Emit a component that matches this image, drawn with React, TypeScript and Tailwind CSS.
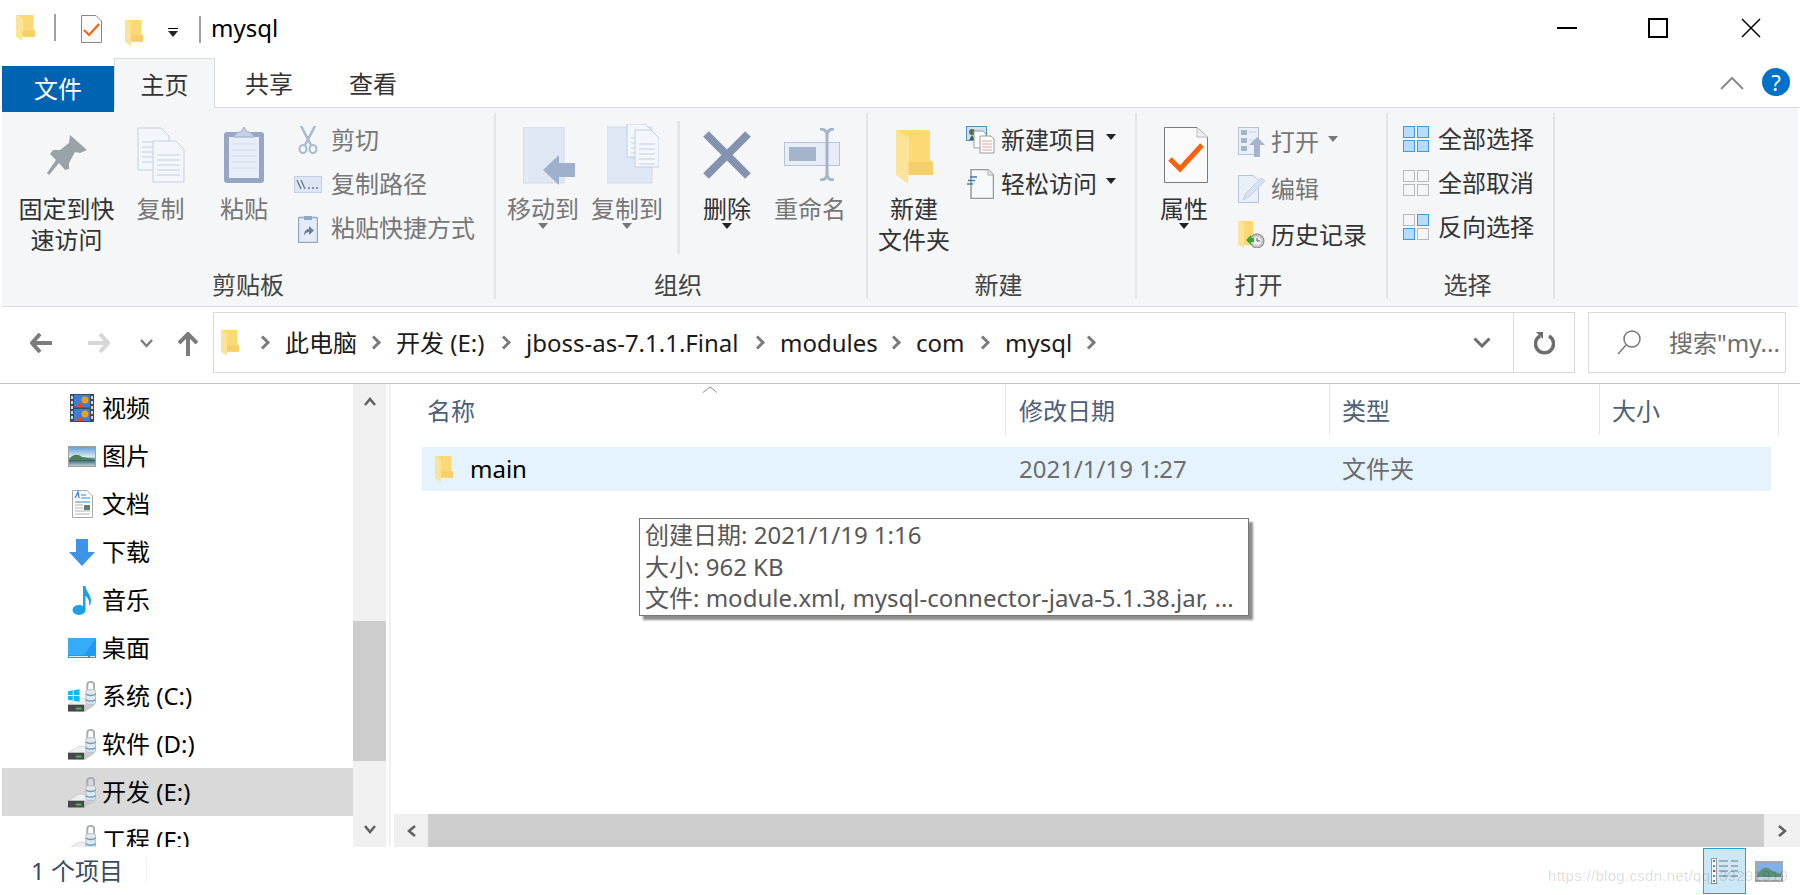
import type { ReactNode } from "react";

const FONT = "font-['Noto_Sans','Noto_Sans_CJK_SC',sans-serif]";

const Folder = ({ w = 18, h = 26 }: { w?: number; h?: number }) => (
  <svg width={w} height={h} viewBox="0 0 36 54" preserveAspectRatio="none">
    <path d="M0 0H33V30L36 32V45H12V8Z" fill="#fcd975" />
    <path d="M12 32H36V45H12Z" fill="#f5cf6a" />
    <path d="M0 0L12 8V54L0 45Z" fill="#fbe39a" />
  </svg>
);

const Caret = ({ dark = true }: { dark?: boolean }) => (
  <svg width="10" height="6" viewBox="0 0 10 6">
    <path d="M0 0H10L5 6Z" fill={dark ? "#222" : "#777"} />
  </svg>
);

const Pin = () => (
  <svg width="40" height="40" viewBox="0 0 40 40">
    <path d="M23 0L40 15L33 18L28 17L22 28L22 34L18 35L12 28L2 40L0 38L9 25L3 19L6 15L13 15L22 8Z" fill="#99a2a6" />
  </svg>
);

const Doc = ({ x, y, w, h }: { x: number; y: number; w: number; h: number }) => (
  <g>
    <path d={`M${x} ${y}H${x + w - 8}L${x + w} ${y + 8}V${y + h}H${x}Z`} fill="#f3f6fb" stroke="#c3d0e4" />
    {[14, 19, 24, 29, 34].map((d) => (
      <path key={d} d={`M${x + 4} ${y + d}H${x + w - 4}`} stroke="#c5d0e0" />
    ))}
  </g>
);

const CopyDocs = () => (
  <svg width="48" height="56" viewBox="0 0 48 56">
    <Doc x={1} y={1} w={31} h={42} />
    <Doc x={16} y={14} w={31} h={41} />
  </svg>
);

const Clipboard = () => (
  <svg width="40" height="58" viewBox="0 0 40 58">
    <rect x="0" y="6" width="40" height="51" rx="3" fill="#95a7c5" />
    <rect x="5" y="11" width="30" height="41" fill="#e7eef8" />
    {[18, 24, 30, 36, 42].map((d) => (
      <path key={d} d={`M7 ${d}H33`} stroke="#d2dcea" />
    ))}
    <path d="M9 11L14 6H17L20 1L23 6H26L31 11Z" fill="#c5d0e2" stroke="#9aacc8" />
  </svg>
);

const Scissors = () => (
  <svg width="20" height="28" viewBox="0 0 20 28" fill="none" stroke="#a8b8d0">
    <path d="M3 0L13 19M17 0L7 19" strokeWidth="2.5" />
    <ellipse cx="5" cy="23" rx="3.5" ry="4" strokeWidth="2" />
    <ellipse cx="15" cy="23" rx="3.5" ry="4" strokeWidth="2" />
  </svg>
);

const PathIcon = () => (
  <svg width="28" height="17" viewBox="0 0 28 17">
    <rect x="0.5" y="0.5" width="27" height="16" fill="#dce5f3" stroke="#c3d0e4" />
    <path d="M3 4L7 13M7 4L11 13" stroke="#6a7690" strokeWidth="1.3" />
    <path d="M14 12H16M18 12H20M22 12H24" stroke="#6a7690" strokeWidth="1.5" />
  </svg>
);

const ShortcutIcon = () => (
  <svg width="20" height="29" viewBox="0 0 20 29">
    <rect x="0.5" y="3.5" width="19" height="25" rx="1" fill="#e3ebf6" stroke="#95a7c5" strokeWidth="1.5" />
    <path d="M6 2H14V6H6Z" fill="#95a7c5" />
    <path d="M6 22C6 17 8 15 11 15V12L16 16.500L11 21V18C9 18 7 19 6 22Z" fill="#6f7f99" />
  </svg>
);

const MoveTo = () => (
  <svg width="52" height="58" viewBox="0 0 52 58">
    <path d="M0 0H41V56H0Z" fill="#dfe7f4" stroke="#d0dbec" />
    <path d="M4 1V55" stroke="#eef2f9" />
    <path d="M20 43L36 28V36H52V50H36V58Z" fill="#9fb0cc" />
  </svg>
);

const CopyTo = () => (
  <svg width="52" height="60" viewBox="0 0 52 60">
    <path d="M0 3H45V59H0Z" fill="#dfe7f4" stroke="#d0dbec" />
    <Doc x={20} y={0} w={26} h={33} />
    <Doc x={28} y={6} w={24} h={37} />
  </svg>
);

const DeleteX = () => (
  <svg width="50" height="50" viewBox="0 0 50 50">
    <path d="M4 4L46 46M46 4L4 46" stroke="#8494b0" strokeWidth="8" />
  </svg>
);

const Rename = () => (
  <svg width="56" height="53" viewBox="0 0 56 53" fill="none">
    <rect x="0.500" y="14.500" width="55" height="23" fill="#e6edf7" stroke="#b4c3da" />
    <rect x="5" y="19" width="27" height="14" fill="#a5b3cb" />
    <path d="M36 1C40 1 43 3 43 7V46C43 50 40 52 36 52M50 1C46 1 43 3 43 7M43 46C43 50 46 52 50 52" stroke="#a5b3cb" strokeWidth="3" />
  </svg>
);

const NewItem = () => (
  <svg width="29" height="28" viewBox="0 0 29 28">
    <rect x="0.500" y="0.500" width="20" height="14" fill="#cfe3f5" stroke="#4c8fc7" />
    <circle cx="6" cy="6" r="3" fill="#5a6b4f" />
    <path d="M3 14L6 9L9 14Z" fill="#44604a" />
    <path d="M8 5H17L20 8V22H8Z" fill="#fff" stroke="#999" />
    <path d="M14 10H25L28 13V27H14Z" fill="#fff" stroke="#999" />
    {[15, 18, 21, 24].map((d) => (
      <path key={d} d={`M16 ${d}H26`} stroke="#e0a0a0" />
    ))}
  </svg>
);

const EasyAccess = () => (
  <svg width="27" height="30" viewBox="0 0 27 30">
    <path d="M4 0.500H21L26.500 6V29.500H4Z" fill="#f8f9fb" stroke="#999" strokeWidth="1.500" />
    <path d="M21 0.500V6H26.500" fill="#e2e6ea" stroke="#aaa" />
    <path d="M3 8H10M1 11.500H8M0 15H6" stroke="#3c7fb1" strokeWidth="1.500" />
  </svg>
);

const Properties = () => (
  <svg width="44" height="56" viewBox="0 0 44 56">
    <path d="M0.500 0.500H33L43.500 10V55.500H0.500Z" fill="#fafafa" stroke="#7a7a7a" />
    <path d="M33 0.500V10H43.500" fill="#eee" stroke="#bbb" />
    <path d="M6 32L16 42L38 18" fill="none" stroke="#f7630c" strokeWidth="5" />
  </svg>
);

const QuickProperties = () => (
  <svg width="21" height="28" viewBox="0 0 21 28">
    <path d="M0.500 0.500H15L20.500 6V27.500H0.500Z" fill="#fafafa" stroke="#888" />
    <path d="M3 15L8 20L18 9" fill="none" stroke="#f7630c" strokeWidth="2.200" />
  </svg>
);

const OpenIcon = () => (
  <svg width="27" height="30" viewBox="0 0 27 30">
    <rect x="0.500" y="0.500" width="20" height="27" fill="#eaf0f8" stroke="#b4c3da" />
    <rect x="3" y="3" width="6" height="5" fill="#a5b3cb" />
    <rect x="3" y="11" width="6" height="5" fill="#a5b3cb" />
    <rect x="3" y="19" width="6" height="5" fill="#a5b3cb" />
    <path d="M11 5H18M11 13H15" stroke="#c5d0e0" />
    <path d="M11 18L19 10L27 18H22V30H16V18Z" fill="#a5b3cb" />
  </svg>
);

const EditIcon = () => (
  <svg width="27" height="28" viewBox="0 0 27 28">
    <path d="M0.500 0.500H15L20.500 5V27.500H0.500Z" fill="#eaf0f8" stroke="#b4c3da" />
    <path d="M5 25L8 18L23 3L27 6L12 21Z" fill="#d7e0ee" stroke="#c3cfe2" />
  </svg>
);

const HistoryIcon = () => (
  <svg width="27" height="27" viewBox="0 0 27 27">
    <path d="M0 0H15V13L18 14V24H6V3Z" fill="#fcd975" />
    <path d="M0 0L6 3V27L0 24Z" fill="#fbe39a" />
    <circle cx="19" cy="20" r="7" fill="#c9c9c9" stroke="#7c7c7c" />
    <circle cx="19" cy="20" r="4" fill="#f2f2f2" />
    <path d="M19 17V20H22" stroke="#555" fill="none" />
    <path d="M8 19L13 14V17H16V21H13V24Z" fill="#3aa53a" />
  </svg>
);

const Grid = ({ on }: { on: boolean[] }) => (
  <svg width="26" height="26" viewBox="0 0 26 26">
    {[
      [0, 0],
      [14, 0],
      [0, 14],
      [14, 14],
    ].map(([x, y], i) => (
      <rect key={i} x={x + 0.5} y={y + 0.5} width="11" height="11" fill={on[i] ? "#b5dcfb" : "#f4f6f8"} stroke={on[i] ? "#3d9ae8" : "#b9b9b9"} />
    ))}
  </svg>
);

const Arrow = ({ color, flip }: { color: string; flip?: boolean }) => (
  <svg width="22" height="20" viewBox="0 0 22 20" className={flip ? "-scale-x-100" : ""}>
    <path d="M10 1L2 10L10 19M2 10H22" fill="none" stroke={color} strokeWidth="4" />
  </svg>
);

const Chevron = ({ color = "#7a7a7a" }: { color?: string }) => (
  <svg width="11" height="15" viewBox="0 0 11 15">
    <path d="M2 1.500L8 7.500L2 13.500" fill="none" stroke={color} strokeWidth="3" />
  </svg>
);

const VideoIcon = () => (
  <svg width="24" height="28" viewBox="0 0 24 28">
    <rect width="24" height="28" fill="#3c4b55" />
    <rect x="4" y="1" width="16" height="12.500" fill="#3a7fd8" />
    <rect x="4" y="15" width="16" height="12" fill="#3a7fd8" />
    <path d="M5 13L10 8L14 13ZM5 27L10 22L14 27Z" fill="#e04a2a" />
    <circle cx="15" cy="6" r="3.500" fill="#e8a020" />
    <circle cx="15" cy="20" r="3.500" fill="#e8a020" />
    {[2, 7, 12, 17, 22].map((d) => (
      <g key={d}>
        <rect x="1" y={d} width="2" height="3" fill="#d8d8d8" />
        <rect x="21" y={d} width="2" height="3" fill="#d8d8d8" />
      </g>
    ))}
  </svg>
);

const PictureIcon = () => (
  <svg width="28" height="21" viewBox="0 0 28 21">
    <defs>
      <linearGradient id="sky" x1="0" y1="0" x2="0" y2="1">
        <stop offset="0" stopColor="#5f9ad8" />
        <stop offset="0.500" stopColor="#d5e7f3" />
        <stop offset="0.700" stopColor="#3a6a70" />
        <stop offset="1" stopColor="#c9d8df" />
      </linearGradient>
    </defs>
    <rect x="0.500" y="0.500" width="27" height="20" fill="url(#sky)" stroke="#a0a0a0" />
    <path d="M2 12C6 8 10 8 14 11C18 12 22 12 26 13V14H2Z" fill="#4b7f5a" />
  </svg>
);

const DocumentIcon = () => (
  <svg width="21" height="28" viewBox="0 0 21 28">
    <path d="M0.500 0.500H15L20.500 6V27.500H0.500Z" fill="#fff" stroke="#a8a8a8" />
    <path d="M3 8L6 2L7 8" fill="none" stroke="#2b88d8" strokeWidth="1.300" />
    <path d="M9 5H14M9 8H18M3 12H18" stroke="#2b88d8" />
    <path d="M3 15H11M3 18H11M3 21H18M3 24H18" stroke="#b0b0b0" />
    <rect x="12" y="15" width="6" height="5" fill="#5f8070" />
  </svg>
);

const DownloadIcon = () => (
  <svg width="26" height="27" viewBox="0 0 26 27">
    <path d="M7 0H19V13H26L13 27L0 13H7Z" fill="#3d94e6" />
  </svg>
);

const MusicIcon = () => (
  <svg width="20" height="29" viewBox="0 0 20 29">
    <ellipse cx="7" cy="24" rx="6.500" ry="5" fill="#1ba1e8" />
    <path d="M11 0H13.500C14 6 19 8 19 15C19 17 18 19 17 20C18 14 15 11 13.500 10V24H11Z" fill="#1ba1e8" />
  </svg>
);

const DesktopIcon = () => (
  <svg width="28" height="20" viewBox="0 0 28 20">
    <rect width="28" height="20" fill="#1e9bf0" />
    <path d="M0 0H28L16 17H0Z" fill="#35acf7" />
    <path d="M1 18.500H20M22 18.500H27" stroke="#d8eefc" />
  </svg>
);

const DriveIcon = ({ win }: { win?: boolean }) => (
  <svg width="29" height="32" viewBox="0 0 29 32">
    <path d="M0 25L12 18L22 19L27 23V26L17 32H0Z" fill="#eeeff0" stroke="#b4b6b8" strokeWidth="0.500" />
    <path d="M0 25H17V32H0Z" fill="#45494c" />
    <path d="M17 25L27 23V26L17 32Z" fill="#c9cbcd" />
    <rect x="8" y="28" width="6" height="2" fill="#53b653" />
    <path d="M20 10V4C20 0.500 27 0.500 27 4V10" fill="none" stroke="#a9acaf" strokeWidth="2" />
    <rect x="18.500" y="9.500" width="10" height="15" rx="2" fill="#e2e7ea" stroke="#b3bcc2" />
    <path d="M18.500 14C22 16 25 16 28.500 14M18.500 20C22 22 25 22 28.500 20" fill="none" stroke="#5d9fc9" strokeWidth="1.500" />
    {win && <path d="M0 11L5 10V15H0ZM6 10L12 9V15H6ZM0 16H5V21L0 20ZM6 16H12V22L6 21Z" fill="#0dbbf2" />}
  </svg>
);

const DetailsIcon = () => (
  <svg width="28" height="26" viewBox="0 0 28 26">
    <rect x="0.500" y="0.500" width="5" height="25" fill="#fff" stroke="#999" />
    {[3, 8, 13, 18, 23].map((d, i) => (
      <rect key={d} x="2" y={d - 1} width="2" height="2" fill={i === 2 ? "#c33" : "#3a8fb5"} />
    ))}
    {[3, 8, 13, 18, 23].map((d, i) =>
      i === 4 ? null : <path key={d} d={`M8 ${d}H17M20 ${d}H27`} stroke="#777" />
    )}
  </svg>
);

const LargeIcons = () => (
  <svg width="28" height="21" viewBox="0 0 28 21">
    <rect x="1" y="1" width="26" height="19" fill="#7fb0ea" stroke="#a8a8a8" strokeWidth="2" />
    <path d="M2 15C6 6 12 5 16 9C20 12 24 12 26 13V19H2Z" fill="#5c9078" />
    <rect x="2" y="16" width="24" height="3" fill="#c5d8e5" />
  </svg>
);

type LargeProps = {
  w: number;
  icon: ReactNode;
  lines: string[];
  muted?: boolean;
  caret?: boolean;
  iconClass?: string;
};

const LargeButton = ({ w, icon, lines, muted, caret, iconClass = "pt-[12px]" }: LargeProps) => (
  <div className={`flex flex-col items-center ${muted ? "text-[#777]" : "text-[#333]"}`} style={{ width: w }}>
    <div className={`h-[80px] flex items-start justify-center ${iconClass}`}>{icon}</div>
    {lines.map((l) => (
      <div key={l} className="leading-[31px] whitespace-nowrap">
        {l}
      </div>
    ))}
    {caret && (
      <div className="-mt-[1px]">
        <Caret dark={!muted} />
      </div>
    )}
  </div>
);

type SmallProps = {
  icon: ReactNode;
  label: string;
  muted?: boolean;
  caret?: boolean;
  h?: string;
  gap?: string;
};

const SmallButton = ({ icon, label, muted, caret, h = "h-[44px]", gap = "mr-[3px]" }: SmallProps) => (
  <div className={`flex items-center ${h} ${muted ? "text-[#777]" : "text-[#333]"}`}>
    <div className={`w-[40px] flex justify-center ${gap}`}>{icon}</div>
    <span className="whitespace-nowrap">{label}</span>
    {caret && (
      <span className="ml-[9px] -mt-[6px]">
        <Caret dark={!muted} />
      </span>
    )}
  </div>
);

const Group = ({ w, label, labelClass = "pr-[6px]", children }: { w: number; label: string; labelClass?: string; children: ReactNode }) => (
  <div className="mt-[5px] h-[186px] flex flex-col border-r-[2px] border-[#e3e5e8] shrink-0" style={{ width: w }}>
    <div className="h-[154px] flex">{children}</div>
    <div className={`h-[32px] leading-[35px] text-center text-[#444] ${labelClass}`}>{label}</div>
  </div>
);

const TitleBar = () => (
  <div className="h-[58px] flex items-center shrink-0">
    <div className="ml-[16px] -mt-[2px]">
      <Folder w={19} h={26} />
    </div>
    <div className="ml-[19px] w-[2px] h-[27px] -mt-[3px] bg-[#a0a0a0]" />
    <div className="ml-[25px]">
      <QuickProperties />
    </div>
    <div className="ml-[23px] mt-[7px]">
      <Folder />
    </div>
    <div className="ml-[25px] mt-[6px] flex flex-col gap-[2px]">
      <div className="w-[10px] h-[1px] bg-black" />
      <Caret />
    </div>
    <div className="ml-[21px] w-[2px] h-[27px] bg-[#a0a0a0]" />
    <div className="ml-[10px] text-[24px] text-black leading-none -mt-[2px]">mysql</div>
    <div className="ml-auto flex items-center mr-[39px] -mt-[2px]">
      <div className="w-[20px] h-[2px] bg-black" />
      <div className="ml-[71px] w-[20px] h-[20px] border-[2px] border-black" />
      <svg width="20" height="20" viewBox="0 0 20 20" className="ml-[73px]">
        <path d="M1 1L19 19M19 1L1 19" stroke="#000" strokeWidth="1.500" />
      </svg>
    </div>
  </div>
);

const TabBar = () => (
  <div className="h-[50px] flex shrink-0 pl-[2px] border-b border-[#dadbdc] relative">
    <div className="w-[112px] h-[46px] mt-[8px] bg-[#0063b1] text-white flex items-center justify-center">文件</div>
    <div className="w-[101px] h-[50px] bg-[#f4f6f8] border-t border-x border-[#dadbdc] text-[#333] flex items-center justify-center pt-[3px]">
      主页
    </div>
    <div className="ml-[30px] w-[48px] text-[#333] flex items-center pt-[3px]">共享</div>
    <div className="ml-[56px] w-[48px] text-[#333] flex items-center pt-[3px]">查看</div>
    <div className="ml-auto mr-[10px] flex items-center gap-[18px] -mt-[1px]">
      <svg width="24" height="14" viewBox="0 0 24 14" className="mt-[2px]">
        <path d="M1 13L12 2L23 13" fill="none" stroke="#8a8a8a" strokeWidth="2" />
      </svg>
      <div className="w-[28px] h-[28px] rounded-full bg-[#0072c9] text-white text-[22px] leading-[28px] text-center">?</div>
    </div>
  </div>
);

const Ribbon = () => (
  <div className="h-[199px] mx-[2px] bg-[#f4f6f8] border-b border-[#dadbdc] flex shrink-0">
    <Group w={494} label="剪贴板" labelClass="">
      <div className="ml-[13px]" />
      <LargeButton w={103} iconClass="pt-[22px]" icon={<Pin />} lines={["固定到快", "速访问"]} />
      <LargeButton w={85} muted iconClass="pt-[14px]" icon={<CopyDocs />} lines={["复制"]} />
      <LargeButton w={82} muted iconClass="pt-[13px]" icon={<Clipboard />} lines={["粘贴"]} />
      <div className="ml-[3px] pt-[5px]">
        <SmallButton muted icon={<Scissors />} label="剪切" />
        <SmallButton muted icon={<PathIcon />} label="复制路径" />
        <SmallButton muted icon={<ShortcutIcon />} label="粘贴快捷方式" />
      </div>
    </Group>
    <Group w={372} label="组织">
      <div className="ml-[5px]" />
      <LargeButton w={84} muted caret iconClass="pt-[14px] pl-[12px]" icon={<MoveTo />} lines={["移动到"]} />
      <LargeButton w={84} muted caret iconClass="pt-[11px] pl-[12px]" icon={<CopyTo />} lines={["复制到"]} />
      <div className="ml-[8px] mt-[8px] w-[3px] h-[133px] bg-[#e3e5e8]" />
      <div className="ml-[5px]" />
      <LargeButton w={84} caret iconClass="pt-[17px]" icon={<DeleteX />} lines={["删除"]} />
      <LargeButton w={82} muted iconClass="pt-[15px] pl-[4px]" icon={<Rename />} lines={["重命名"]} />
    </Group>
    <Group w={269} label="新建">
      <div className="ml-[5px]" />
      <LargeButton w={82} iconClass="pt-[17px]" icon={<Folder w={37} h={54} />} lines={["新建", "文件夹"]} />
      <div className="ml-[5px] pt-[5px]">
        <SmallButton caret gap="mr-[1px]" icon={<NewItem />} label="新建项目" />
        <SmallButton caret gap="mr-[1px]" icon={<EasyAccess />} label="轻松访问" />
      </div>
    </Group>
    <Group w={251} label="打开">
      <div className="ml-[5px]" />
      <LargeButton w={84} caret iconClass="pt-[14px] pl-[4px]" icon={<Properties />} lines={["属性"]} />
      <div className="ml-[5px] pt-[6px]">
        <SmallButton muted caret gap="mr-0" h="h-[46px]" icon={<OpenIcon />} label="打开" />
        <SmallButton muted gap="mr-0" h="h-[47px]" icon={<EditIcon />} label="编辑" />
        <SmallButton gap="mr-0" h="h-[45px]" icon={<HistoryIcon />} label="历史记录" />
      </div>
    </Group>
    <Group w={167} label="选择">
      <div className="ml-[8px] pt-[4px]">
        <SmallButton gap="mr-[2px]" icon={<Grid on={[true, true, true, true]} />} label="全部选择" />
        <SmallButton gap="mr-[2px]" icon={<Grid on={[false, false, false, false]} />} label="全部取消" />
        <SmallButton gap="mr-[2px]" icon={<Grid on={[false, true, true, false]} />} label="反向选择" />
      </div>
    </Group>
  </div>
);

const crumbs = [
  { label: "此电脑", w: 86 },
  { label: "开发 (E:)", w: 105 },
  { label: "jboss-as-7.1.1.Final", w: 229 },
  { label: "modules", w: 111 },
  { label: "com", w: 64 },
  { label: "mysql", w: 81 },
];

const NavBar = () => (
  <div className="h-[77px] border-b border-[#c9c9c9] flex items-start shrink-0 pt-[5px]">
    <div className="ml-[30px] mt-[21px]">
      <Arrow color="#7c7c7c" />
    </div>
    <div className="ml-[36px] mt-[21px]">
      <Arrow color="#d6d6d6" flip />
    </div>
    <svg width="13" height="9" viewBox="0 0 13 9" className="ml-[30px] mt-[27px]">
      <path d="M1 1L6.500 7L12 1" fill="none" stroke="#7c7c7c" strokeWidth="2.500" />
    </svg>
    <svg width="20" height="24" viewBox="0 0 20 24" className="ml-[25px] mt-[20px]">
      <path d="M1 11L10 2L19 11M10 2V24" fill="none" stroke="#7c7c7c" strokeWidth="4" />
    </svg>
    <div className="ml-[15px] w-[1362px] h-[61px] border border-[#d9d9d9] flex items-center">
      <div className="ml-[7px] mr-[21px]">
        <Folder />
      </div>
      {crumbs.map((c) => (
        <div key={c.label} className="flex items-center text-[#1a1a1a]">
          <div className="mr-[14px]">
            <Chevron />
          </div>
          <span className="whitespace-nowrap" style={{ width: c.w }}>
            {c.label}
          </span>
        </div>
      ))}
      <Chevron />
      <svg width="18" height="11" viewBox="0 0 18 11" className="ml-auto mr-[22px]">
        <path d="M1.500 1.500L9 9L16.500 1.500" fill="none" stroke="#6d6d6d" strokeWidth="3" />
      </svg>
      <div className="w-[61px] h-full border-l border-[#d9d9d9] flex items-center justify-center">
        <svg width="21" height="24" viewBox="0 0 21 24">
          <path d="M6 5A9 9 0 1 0 15 5" fill="none" stroke="#6d6d6d" strokeWidth="3.500" />
          <path d="M2 1H9V8Z" fill="#6d6d6d" />
        </svg>
      </div>
    </div>
    <div className="ml-[13px] w-[198px] h-[61px] border border-[#d9d9d9] flex items-center text-[#6d6d6d]">
      <svg width="24" height="25" viewBox="0 0 24 25" className="ml-[28px] mr-[28px]" fill="none" stroke="#777" strokeWidth="1.500">
        <circle cx="15" cy="9" r="8" />
        <path d="M9 15L1 24" />
      </svg>
      <span className="whitespace-nowrap">搜索"my...</span>
    </div>
  </div>
);

const places = [
  { icon: <VideoIcon />, label: "视频" },
  { icon: <PictureIcon />, label: "图片" },
  { icon: <DocumentIcon />, label: "文档" },
  { icon: <DownloadIcon />, label: "下载" },
  { icon: <MusicIcon />, label: "音乐" },
  { icon: <DesktopIcon />, label: "桌面" },
  { icon: <DriveIcon win />, label: "系统 (C:)" },
  { icon: <DriveIcon />, label: "软件 (D:)" },
  { icon: <DriveIcon />, label: "开发 (E:)", active: true },
  { icon: <DriveIcon />, label: "工程 (F:)" },
];

const Sidebar = () => (
  <div className="w-[351px] ml-[2px] h-full overflow-hidden shrink-0">
    {places.map((p) => (
      <div key={p.label} className={`h-[48px] flex items-center text-black ${p.active ? "bg-[#d9d9d9]" : ""}`}>
        <div className="ml-[66px] w-[28px] flex justify-center">{p.icon}</div>
        <span className="ml-[6px] whitespace-nowrap">{p.label}</span>
      </div>
    ))}
  </div>
);

const SideScroll = () => (
  <div className="w-[33px] h-full bg-[#f0f0f0] flex flex-col shrink-0">
    <div className="h-[237px] flex justify-center pt-[13px]">
      <svg width="12" height="9" viewBox="0 0 12 9">
        <path d="M1 8L6 2L11 8" fill="none" stroke="#606060" strokeWidth="2.500" />
      </svg>
    </div>
    <div className="h-[140px] bg-[#cdcdcd]" />
    <div className="flex-1 flex justify-center items-end pb-[13px]">
      <svg width="12" height="9" viewBox="0 0 12 9">
        <path d="M1 1L6 7L11 1" fill="none" stroke="#606060" strokeWidth="2.500" />
      </svg>
    </div>
  </div>
);

const FileList = () => (
  <div className="flex-1 h-full flex flex-col min-w-0">
    <div className="h-[51px] flex text-[#4c607a] shrink-0 relative">
      <svg width="16" height="7" viewBox="0 0 16 7" className="absolute left-[311px] top-[2px]">
        <path d="M1 6.500L8 1L15 6.500" fill="none" stroke="#8a8a8a" />
      </svg>
      <div className="w-[614px] pl-[36px] pt-[9px]">名称</div>
      <div className="w-[324px] pl-[13px] pt-[9px] border-l border-[#e5e5e5]">修改日期</div>
      <div className="w-[270px] pl-[12px] pt-[9px] border-l border-[#e5e5e5]">类型</div>
      <div className="w-[180px] pl-[12px] pt-[9px] border-x border-[#e5e5e5]">大小</div>
    </div>
    <div className="flex-1 pt-[12px]">
      <div className="ml-[31px] w-[1349px] h-[44px] bg-[#e5f3ff] flex items-center">
        <div className="w-[583px] flex items-center">
          <div className="ml-[13px]">
            <Folder />
          </div>
          <span className="ml-[17px] text-black">main</span>
        </div>
        <div className="w-[324px] pl-[14px] text-[#6d6d6d]">2021/1/19 1:27</div>
        <div className="pl-[13px] text-[#6d6d6d]">文件夹</div>
      </div>
    </div>
    <div className="ml-[3px] h-[33px] flex bg-[#cdcdcd] shrink-0">
      <div className="w-[34px] bg-[#f0f0f0] flex items-center justify-center">
        <svg width="9" height="12" viewBox="0 0 9 12">
          <path d="M8 1L2 6L8 11" fill="none" stroke="#606060" strokeWidth="2.500" />
        </svg>
      </div>
      <div className="flex-1" />
      <div className="w-[36px] bg-[#f0f0f0] flex items-center justify-center">
        <svg width="9" height="12" viewBox="0 0 9 12">
          <path d="M1 1L7 6L1 11" fill="none" stroke="#606060" strokeWidth="2.500" />
        </svg>
      </div>
    </div>
  </div>
);

const StatusBar = () => (
  <div className="h-[48px] flex items-center shrink-0 text-[#3b4a63] relative">
    <span className="ml-[31px] whitespace-nowrap">1 个项目</span>
    <div className="ml-[23px] w-[1px] h-[24px] bg-[#f0f0f0]" />
    <div className="ml-auto mr-[17px] flex items-center">
      <div className="w-[43px] h-[46px] bg-[#cce8f6] border border-[#26a0da] flex items-center justify-center">
        <DetailsIcon />
      </div>
      <div className="ml-[9px]">
        <LargeIcons />
      </div>
    </div>
  </div>
);

export default function App() {
  return (
    <div className={`relative w-[1800px] h-[895px] overflow-hidden bg-white flex flex-col text-[24px] leading-normal ${FONT}`}>
      <TitleBar />
      <TabBar />
      <Ribbon />
      <NavBar />
      <div className="flex flex-1 min-h-0">
        <Sidebar />
        <SideScroll />
        <div className="ml-[3px] w-[2px] h-full bg-[#f0f0f0] shrink-0" />
        <FileList />
      </div>
      <StatusBar />

      <div className="absolute left-[639px] top-[518px] w-[610px] h-[98px] bg-white border border-[#767676] shadow-[4px_4px_2px_rgba(0,0,0,0.45)] pl-[5px] text-[#575757] leading-[31.500px] whitespace-nowrap">
        <div>创建日期: 2021/1/19 1:16</div>
        <div>大小: 962 KB</div>
        <div>文件: module.xml, mysql-connector-java-5.1.38.jar, ...</div>
      </div>

      <div className="absolute left-[1548px] top-[864px] text-[15px] leading-[24px] tracking-[0.3px] whitespace-nowrap text-[#000]/15 font-['Liberation_Sans',sans-serif]">
        https://blog.csdn.net/qq_39291919
      </div>
    </div>
  );
}
